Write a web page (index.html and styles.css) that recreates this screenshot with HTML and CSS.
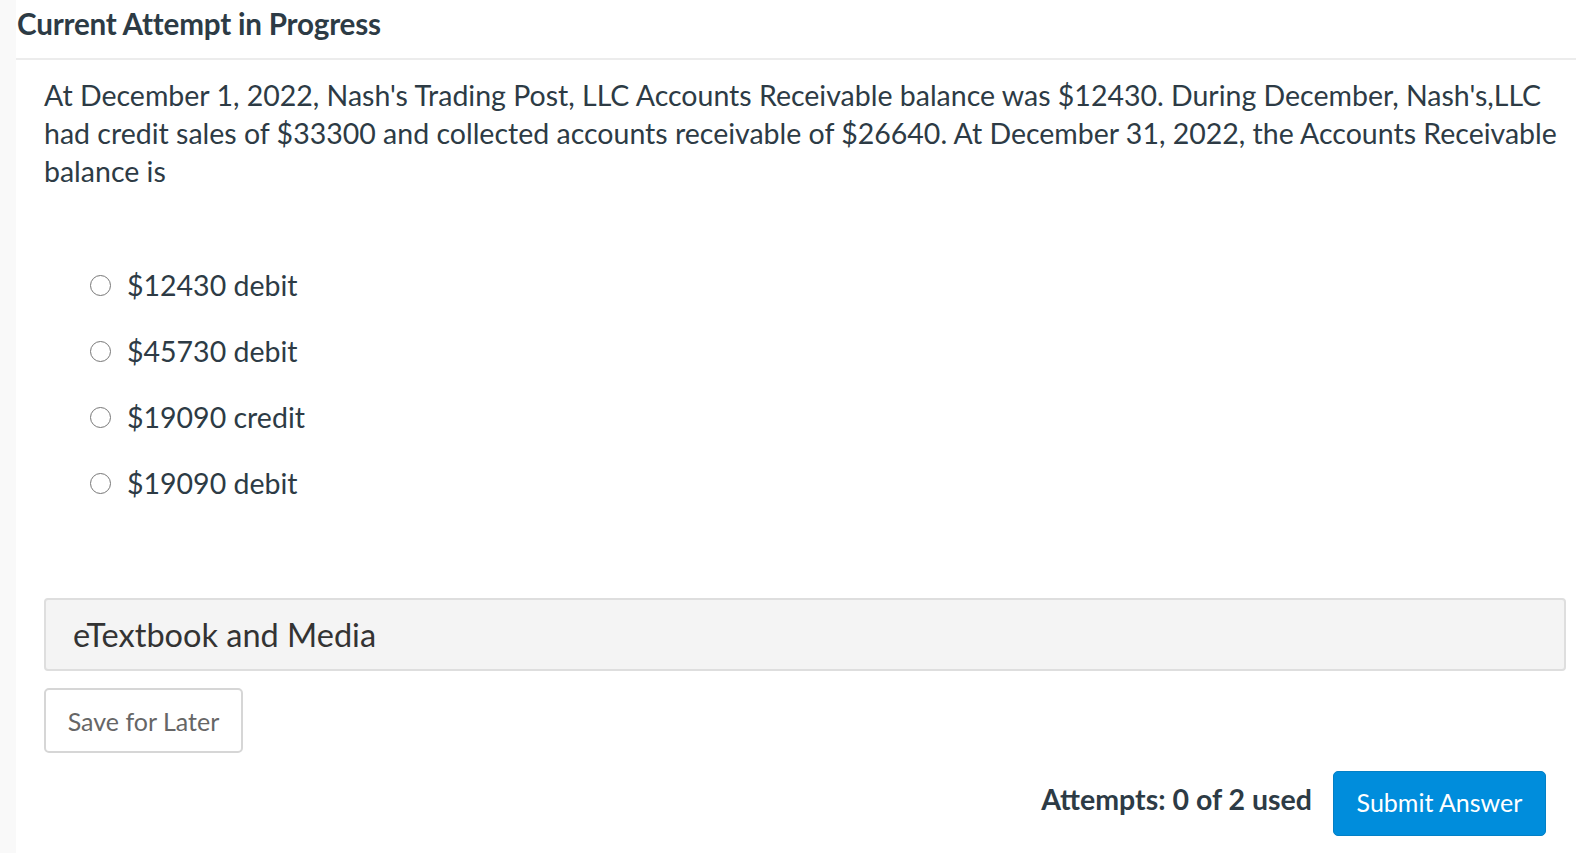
FILE: index.html
```html
<!DOCTYPE html>
<html>
<head>
<meta charset="utf-8">
<link rel="stylesheet" href="styles.css">
</head>
<body>
<div class="page">
  <div class="gutter"></div>
  <main class="main">
    <header class="header"><h1 class="title">Current Attempt in Progress</h1></header>
    <section class="content">
      <p class="question">At December 1, 2022, Nash's Trading Post, LLC Accounts Receivable balance was $12430. During December, Nash's,LLC had credit sales of $33300 and collected accounts receivable of $26640. At December 31, 2022, the Accounts Receivable balance is</p>
      <ul class="options">
        <li class="option"><span class="radio"></span><span>$12430 debit</span></li>
        <li class="option"><span class="radio"></span><span>$45730 debit</span></li>
        <li class="option"><span class="radio"></span><span>$19090 credit</span></li>
        <li class="option"><span class="radio"></span><span>$19090 debit</span></li>
      </ul>
      <div class="media">eTextbook and Media</div>
      <div class="save-row"><button class="btn-save">Save for Later</button></div>
      <div class="submit-row">
        <span class="attempts">Attempts: 0 of 2 used</span>
        <button class="btn-submit">Submit Answer</button>
      </div>
    </section>
  </main>
</div>
</body>
</html>
```
FILE: styles.css
```css
html, body { margin: 0; padding: 0; background: #fff; }
body { font-family: Lato, "Open Sans", sans-serif; color: #2d3b45; }
.page { display: flex; min-height: 853px; }
.gutter { width: 16px; flex: none; background: #f9f9f9; }
.main { flex: 1; min-width: 0; }
.header { height: 60px; border-bottom: 2px solid #ececec; box-sizing: border-box; padding-left: 1px; }
.title { margin: 0; font-size: 29.6px; font-weight: 700; line-height: 48px; color: #2d3b45; letter-spacing: -0.2px; }
.content { padding: 16px 10px 0 28px; }
.question { margin: 0; font-size: 28.5px; line-height: 38px; }
.options { list-style: none; margin: 62px 0 0 0; padding: 0 0 0 46px; }
.option { display: flex; align-items: center; height: 66px; font-size: 28.5px; }
.radio { width: 21px; height: 21px; border: 1.5px solid #777; border-radius: 50%; margin-right: 16px; box-sizing: border-box; flex: none; }
.media { margin-top: 82px; height: 73px; background: #f4f4f4; border: 2px solid #dedede; border-radius: 4px; box-sizing: border-box; display: flex; align-items: center; padding-left: 27px; font-size: 32.5px; color: #333; }
.save-row { margin-top: 17px; }
.btn-save { font-family: inherit; height: 65px; width: 199px; background: #fff; border: 2px solid #d6d6d6; border-radius: 5px; font-size: 25px; color: #666; padding: 0; }
.submit-row { display: flex; justify-content: flex-end; align-items: center; margin-top: 18px; padding-right: 20px; }
.attempts { font-size: 28.5px; font-weight: 700; margin-right: 21px; margin-bottom: 10px; }
.btn-submit { font-family: inherit; height: 65px; width: 213px; background: #008ddc; border: 1px solid #0380c6; border-radius: 5px; color: #fff; font-size: 25px; padding: 0 0 3px 0; }
```
